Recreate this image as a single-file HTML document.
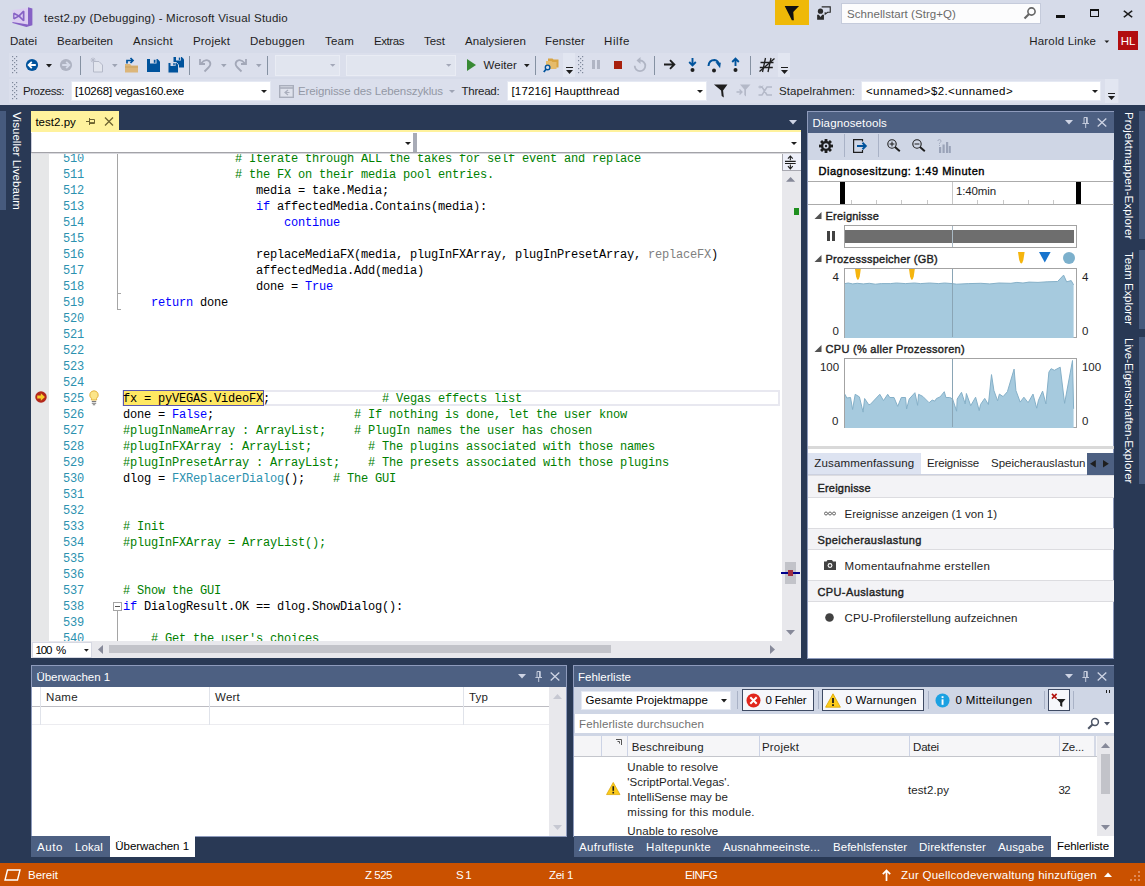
<!DOCTYPE html>
<html><head><meta charset="utf-8"><title>test2.py (Debugging) - Microsoft Visual Studio</title>
<style>
html,body{margin:0;padding:0}
body{width:1145px;height:886px;overflow:hidden;position:relative;background:#293955;font-family:"Liberation Sans",sans-serif;font-size:12px;color:#1e1e1e}
.a{position:absolute}
.t{position:absolute;white-space:pre;font-family:"Liberation Sans",sans-serif}
#chrome{left:0;top:0;width:1145px;height:105px;background:#d6dbe9}
.combo{position:absolute;background:#fff;border:1px solid #e5e9f3;box-sizing:border-box}
.grip{position:absolute;width:5px;background-image:radial-gradient(circle,#8a93a8 0.7px,transparent 0.9px);background-size:3px 3px}
.vsep{position:absolute;width:1px;background:#8591a2}
.ptitle{position:absolute;height:21px;background:#4d6082}
.panel{position:absolute;background:#fff}
.code div.ln{color:#2b91af}
.code{position:absolute;left:0;top:0;font-family:"Liberation Mono",monospace;font-size:12px;letter-spacing:-0.201px;white-space:pre;line-height:16px;color:#000}
.code div{position:absolute;height:16px;white-space:pre}
.c{color:#008000}.k{color:#0000ff}.g{color:#808080}.cl{color:#2b91af}
svg{position:absolute;overflow:visible}
</style></head><body>
<!-- ===== top chrome ===== -->
<div id="chrome" class="a"></div>
<!-- VS logo -->
<svg style="left:11.8px;top:6.8px" width="20.4" height="19.9" viewBox="135 78 233 227"><path d="M140 112 L318 88 L318 290 L140 258 Z" fill="#dccdf1"/><path d="M318 80 L368 95 L368 287 L300 305 L140 262 L140 250 L318 278 Z" fill="#8661c5"/><path d="M148 150 L160 142 L212 170 L262 118 L278 125 L278 235 L262 240 L212 192 L160 220 L148 212 Z M163 165 L163 197 L196 181 Z M228 181 L258 150 L258 212 Z" fill="#8661c5" fill-rule="evenodd"/></svg>
<!-- notification flag -->
<div class="a" style="left:775px;top:0;width:34px;height:25.3px;background:#efb908"></div>
<svg style="left:784px;top:5px" width="16" height="16" viewBox="160 57 183 183"><path d="M168 68 L332 68 L266 138 L273 230 L250 230 Z" fill="#111"/></svg>
<!-- feedback icon -->
<svg style="left:816px;top:5px" width="16" height="16" viewBox="527 57 183 183"><path d="M592 78 H690 V140 H660 L632 162 V140" fill="none" stroke="#2a2a2a" stroke-width="13"/><circle cx="578" cy="128" r="30" fill="#2a2a2a"/><path d="M540 168 H560 L578 195 L598 168 H618 V226 H540 Z" fill="#2a2a2a"/></svg>
<!-- quick launch -->
<div class="combo" style="left:841px;top:3px;width:200px;height:21px;border-color:#c5cbdb;background:#fcfcfd"></div>
<svg style="left:1023px;top:6px" width="14" height="14" viewBox="0 0 14 14"><circle cx="8.5" cy="5.5" r="3.6" fill="none" stroke="#666" stroke-width="1.6"/><path d="M6 8 L1.5 12.5" stroke="#666" stroke-width="2.2"/></svg>
<!-- window buttons -->
<div class="a" style="left:1056px;top:14.7px;width:9px;height:3.2px;background:#111"></div>
<div class="a" style="left:1090px;top:9.1px;width:7.2px;height:5px;border:1px solid #111;border-top-width:2.8px;box-sizing:content-box"></div>
<svg style="left:1123px;top:10px" width="10" height="8" viewBox="0 0 12 12" preserveAspectRatio="none"><path d="M1 1 L11 11 M11 1 L1 11" stroke="#1e1e1e" stroke-width="2"/></svg>
<!-- user badge -->
<svg style="left:1103.6px;top:39.6px" width="6.5" height="4" viewBox="0 0 8 5"><path d="M0.5 0.5 H6.5 L3.5 3.8 Z" fill="#1e1e1e"/></svg>
<div class="a" style="left:1118.1px;top:31.2px;width:19.7px;height:19.3px;background:#b20e10"></div>
<!-- ===== toolbar row 1 ===== -->
<div class="a" style="left:9px;top:53px;width:781px;height:24px;background:#dbdfec"></div>
<div class="a" style="left:9px;top:79px;width:1110px;height:24px;background:#dbdfec"></div>
<svg style="left:12.0px;top:56.0px" width="6" height="18" viewBox="0 0 6 18"><g fill="#7f899c"><rect x="0" y="0" width="1.2" height="1.2"/><rect x="4" y="0" width="1.2" height="1.2"/><rect x="2" y="2" width="1.2" height="1.2"/><rect x="0" y="4" width="1.2" height="1.2"/><rect x="4" y="4" width="1.2" height="1.2"/><rect x="2" y="6" width="1.2" height="1.2"/><rect x="0" y="8" width="1.2" height="1.2"/><rect x="4" y="8" width="1.2" height="1.2"/><rect x="2" y="10" width="1.2" height="1.2"/><rect x="0" y="12" width="1.2" height="1.2"/><rect x="4" y="12" width="1.2" height="1.2"/><rect x="2" y="14" width="1.2" height="1.2"/><rect x="0" y="16" width="1.2" height="1.2"/><rect x="4" y="16" width="1.2" height="1.2"/></g></svg>
<svg style="left:25.2px;top:57.9px" width="14" height="14" viewBox="0 0 14 14"><circle cx="7" cy="7" r="6.1" fill="#00539c"/><path d="M10.8 7 H4 M6.8 3.8 L3.6 7 L6.8 10.2" stroke="#fff" stroke-width="1.8" fill="none"/></svg>
<svg style="left:46px;top:63.7px" width="6" height="3.5" viewBox="0 0 7 4" preserveAspectRatio="none"><path d="M0 0 H7 L3.5 4 Z" fill="#1e1e1e"/></svg>
<svg style="left:58.9px;top:57.9px" width="14" height="14" viewBox="0 0 14 14"><circle cx="7" cy="7" r="6.1" fill="#aeb3c2"/><path d="M3.2 7 H10 M7.2 3.8 L10.4 7 L7.2 10.2" stroke="#d6dbe9" stroke-width="1.8" fill="none"/></svg>
<div class="vsep" style="left:80px;top:56px;height:19px"></div>
<!-- new item (disabled) -->
<svg style="left:90px;top:57px" width="14" height="16" viewBox="0 0 14 16"><path d="M3.5 4.5 H9 L12.5 8 V15 H3.5 Z" fill="#e2e5ee" stroke="#b4b9c8" stroke-width="1"/><path d="M3 0.5 V5.5 M0.5 3 H5.5 M1.2 1.2 L4.8 4.8 M4.8 1.2 L1.2 4.8" stroke="#b4b9c8" stroke-width="0.9"/></svg>
<svg style="left:111.5px;top:63.9px" width="5.6" height="3.3" viewBox="0 0 7 4" preserveAspectRatio="none"><path d="M0 0 H7 L3.5 4 Z" fill="#9ea4b4"/></svg>
<!-- open -->
<svg style="left:124px;top:57px" width="15" height="16" viewBox="0 0 15 16"><path d="M1 7 H6 L7.5 8.5 H14 V15.5 H1 Z" fill="#dcb67a"/><path d="M1 10 H14" stroke="#c9a25f" stroke-width="1"/><path d="M3 6.5 V3.5 H8.5 M6.5 1 L9 3.5 L6.5 6" stroke="#00539c" stroke-width="1.7" fill="none"/></svg>
<!-- save -->
<svg style="left:147px;top:59px" width="13" height="13" viewBox="0 0 13 13"><path d="M0 0 H10.5 L13 2.5 V13 H0 Z" fill="#00539c"/><rect x="3" y="0" width="6.5" height="4.5" fill="#d6dbe9"/><rect x="6.8" y="0.8" width="1.7" height="3" fill="#00539c"/><rect x="2.5" y="8" width="8" height="5" fill="#00539c"/></svg>
<!-- save all -->
<svg style="left:168px;top:57px" width="16" height="16" viewBox="0 0 16 16"><path d="M5.5 0 H13.8 L16 2.2 V10.5 H5.5 Z" fill="#00539c"/><rect x="8" y="0" width="5" height="3.5" fill="#d6dbe9"/><rect x="10.8" y="0.6" width="1.4" height="2.3" fill="#00539c"/><path d="M0 5.5 H8.3 L10.5 7.7 V16 H0 Z" fill="#00539c" stroke="#d6dbe9" stroke-width="1"/><rect x="2.5" y="5.5" width="5" height="3.5" fill="#d6dbe9"/><rect x="5.3" y="6.1" width="1.4" height="2.3" fill="#00539c"/></svg>
<div class="vsep" style="left:189px;top:56px;height:19px"></div>
<!-- undo / redo (disabled) -->
<svg style="left:199px;top:58px" width="13" height="14" viewBox="0 0 13 14"><path d="M1 1 V6 H6" stroke="#a3a8b8" stroke-width="1.8" fill="none"/><path d="M2 5.5 Q6 0.5 10 3 Q13 6 9.5 9.5 L5.5 13.5" stroke="#a3a8b8" stroke-width="1.8" fill="none"/></svg>
<svg style="left:220.5px;top:63.9px" width="5.6" height="3.3" viewBox="0 0 7 4" preserveAspectRatio="none"><path d="M0 0 H7 L3.5 4 Z" fill="#9ea4b4"/></svg>
<svg style="left:234px;top:58px" width="13" height="14" viewBox="0 0 13 14"><path d="M12 1 V6 H7" stroke="#a3a8b8" stroke-width="1.8" fill="none"/><path d="M11 5.5 Q7 0.5 3 3 Q0 6 3.5 9.5 L7.5 13.5" stroke="#a3a8b8" stroke-width="1.8" fill="none"/></svg>
<svg style="left:255.5px;top:63.9px" width="5.6" height="3.3" viewBox="0 0 7 4" preserveAspectRatio="none"><path d="M0 0 H7 L3.5 4 Z" fill="#9ea4b4"/></svg>
<div class="vsep" style="left:267px;top:56px;height:19px"></div>
<div class="combo" style="left:275px;top:55px;width:65px;height:21px;background:#e1e5ef;border-color:#e9ecf4"></div>
<svg style="left:330.3px;top:64px" width="5.4" height="3.2" viewBox="0 0 6 4" preserveAspectRatio="none"><path d="M0 0 H6 L3 3.6 Z" fill="#a3a8b8"/></svg>
<div class="combo" style="left:346px;top:55px;width:110px;height:21px;background:#e1e5ef;border-color:#e9ecf4"></div>
<svg style="left:446.3px;top:64px" width="5.4" height="3.2" viewBox="0 0 6 4" preserveAspectRatio="none"><path d="M0 0 H6 L3 3.6 Z" fill="#a3a8b8"/></svg>
<svg style="left:467px;top:59px" width="9" height="12" viewBox="0 0 9 12"><path d="M0 0 L9 6 L0 12 Z" fill="#388a34"/></svg>
<svg style="left:523.5px;top:63.9px" width="5.6" height="3.3" viewBox="0 0 7 4" preserveAspectRatio="none"><path d="M0 0 H7 L3.5 4 Z" fill="#1e1e1e"/></svg>
<div class="vsep" style="left:535px;top:56px;height:19px"></div>
<!-- find in files -->
<svg style="left:543px;top:57px" width="16" height="16" viewBox="0 0 16 16"><path d="M5 1.5 H9.5 L10.5 2.5 H15.5 V10.5 H5 Z" fill="#d9a441"/><path d="M3 4 H8.5 L9.5 5 H13.5 V12 H3 Z" fill="#e6bb6a"/><circle cx="4.6" cy="10.4" r="2.3" fill="#d6dbe9" stroke="#00539c" stroke-width="1.4"/><path d="M3 12.2 L0.8 15" stroke="#00539c" stroke-width="1.8"/></svg>
<div class="a" style="left:563px;top:53px;width:12px;height:24px;background:#e2e6f1"></div>
<svg style="left:566px;top:67px" width="7" height="7" viewBox="0 0 7 7"><path d="M0 0.5 H7" stroke="#1e1e1e" stroke-width="1"/><path d="M0 3 H7 L3.5 7 Z" fill="#1e1e1e"/></svg>
<svg style="left:578.0px;top:56.0px" width="6" height="18" viewBox="0 0 6 18"><g fill="#7f899c"><rect x="0" y="0" width="1.2" height="1.2"/><rect x="4" y="0" width="1.2" height="1.2"/><rect x="2" y="2" width="1.2" height="1.2"/><rect x="0" y="4" width="1.2" height="1.2"/><rect x="4" y="4" width="1.2" height="1.2"/><rect x="2" y="6" width="1.2" height="1.2"/><rect x="0" y="8" width="1.2" height="1.2"/><rect x="4" y="8" width="1.2" height="1.2"/><rect x="2" y="10" width="1.2" height="1.2"/><rect x="0" y="12" width="1.2" height="1.2"/><rect x="4" y="12" width="1.2" height="1.2"/><rect x="2" y="14" width="1.2" height="1.2"/><rect x="0" y="16" width="1.2" height="1.2"/><rect x="4" y="16" width="1.2" height="1.2"/></g></svg>
<div class="a" style="left:592px;top:60px;width:3px;height:9px;background:#b0b5c4"></div>
<div class="a" style="left:597px;top:60px;width:3px;height:9px;background:#b0b5c4"></div>
<div class="a" style="left:614px;top:61px;width:8px;height:8px;background:#a8200d"></div>
<svg style="left:633px;top:57px" width="14" height="16" viewBox="0 0 14 16"><path d="M7 3.5 A5.3 5.3 0 1 1 1.7 8.8" stroke="#b0b5c4" stroke-width="1.8" fill="none"/><path d="M7.5 0 V7 L3.5 3.5 Z" fill="#b0b5c4"/></svg>
<div class="vsep" style="left:654px;top:56px;height:19px"></div>
<svg style="left:664px;top:59px" width="12" height="11" viewBox="0 0 12 11"><path d="M0 5.5 H10 M6 1.2 L10.3 5.5 L6 9.8" stroke="#1e1e1e" stroke-width="1.9" fill="none"/></svg>
<svg style="left:688px;top:57px" width="9" height="16" viewBox="0 0 9 16"><path d="M4.5 1 V8 M1.2 5 L4.5 8.3 L7.8 5" stroke="#00539c" stroke-width="1.9" fill="none"/><circle cx="4.5" cy="13" r="2" fill="#1e1e1e"/></svg>
<svg style="left:707px;top:58px" width="14" height="15" viewBox="0 0 14 15"><path d="M1.5 8 Q2 2 7.5 2 Q11 2.3 11.5 6" stroke="#00539c" stroke-width="2" fill="none"/><path d="M8 4.5 H13.5 V10 Z" fill="#00539c" transform="rotate(8 11 7)"/><circle cx="7" cy="12.5" r="2" fill="#1e1e1e"/></svg>
<svg style="left:731px;top:57px" width="9" height="16" viewBox="0 0 9 16"><path d="M4.5 9 V2 M1.2 5 L4.5 1.7 L7.8 5" stroke="#00539c" stroke-width="1.9" fill="none"/><circle cx="4.5" cy="13" r="2" fill="#1e1e1e"/></svg>
<div class="vsep" style="left:750px;top:56px;height:19px"></div>
<svg style="left:759px;top:57px" width="16" height="16" viewBox="0 0 16 16"><path d="M6.5 1 L3.5 15 M12 1 L9 15 M1.5 5.5 H14.5 M0.8 10.5 H13.8" stroke="#1e1e1e" stroke-width="1.3" fill="none"/><path d="M0.5 14.5 L15.5 1.5" stroke="#1e1e1e" stroke-width="1.4"/></svg>
<div class="a" style="left:778px;top:53px;width:12px;height:24px;background:#e2e6f1"></div>
<svg style="left:781px;top:67px" width="7" height="7" viewBox="0 0 7 7"><path d="M0 0.5 H7" stroke="#1e1e1e" stroke-width="1"/><path d="M0 3 H7 L3.5 7 Z" fill="#1e1e1e"/></svg>
<!-- ===== toolbar row 2 ===== -->
<svg style="left:12.0px;top:82.0px" width="6" height="18" viewBox="0 0 6 18"><g fill="#7f899c"><rect x="0" y="0" width="1.2" height="1.2"/><rect x="4" y="0" width="1.2" height="1.2"/><rect x="2" y="2" width="1.2" height="1.2"/><rect x="0" y="4" width="1.2" height="1.2"/><rect x="4" y="4" width="1.2" height="1.2"/><rect x="2" y="6" width="1.2" height="1.2"/><rect x="0" y="8" width="1.2" height="1.2"/><rect x="4" y="8" width="1.2" height="1.2"/><rect x="2" y="10" width="1.2" height="1.2"/><rect x="0" y="12" width="1.2" height="1.2"/><rect x="4" y="12" width="1.2" height="1.2"/><rect x="2" y="14" width="1.2" height="1.2"/><rect x="0" y="16" width="1.2" height="1.2"/><rect x="4" y="16" width="1.2" height="1.2"/></g></svg>
<div class="combo" style="left:71px;top:81px;width:200px;height:20px"></div>
<svg style="left:261px;top:89.7px" width="6" height="3.3" viewBox="0 0 6 4" preserveAspectRatio="none"><path d="M0 0 H6 L3 3.6 Z" fill="#1e1e1e"/></svg>
<svg style="left:279px;top:85px" width="15" height="13" viewBox="0 0 15 13"><rect x="0.7" y="0.7" width="13.6" height="11.6" fill="#dfe2ec" stroke="#a9aebc" stroke-width="1.4"/><path d="M1 3 H14" stroke="#a9aebc" stroke-width="1.6"/><path d="M9 5 L6 7.5 L9 10 M6 7.5 H10.5" stroke="#a9aebc" stroke-width="1.2" fill="none"/></svg>
<svg style="left:449px;top:89.7px" width="6" height="3.3" viewBox="0 0 6 4" preserveAspectRatio="none"><path d="M0 0 H6 L3 3.6 Z" fill="#9ea4b4"/></svg>
<div class="combo" style="left:507px;top:81px;width:200px;height:20px"></div>
<svg style="left:697px;top:89.7px" width="6" height="3.3" viewBox="0 0 6 4" preserveAspectRatio="none"><path d="M0 0 H6 L3 3.6 Z" fill="#1e1e1e"/></svg>
<svg style="left:714px;top:84px" width="15" height="14" viewBox="0 0 15 14"><path d="M0.5 0.5 H14 L9 6.5 V13.5 L7 12 V6.5 Z" fill="#1e1e1e" transform="skewX(6) translate(-0.6 0)"/></svg>
<svg style="left:736px;top:84px" width="15" height="14" viewBox="0 0 15 14"><path d="M4 0.5 H14.5 L10 5.5 V12.5 L8.3 11 V5.5 Z" fill="#b4b9c8"/><path d="M0.5 8 H6 M3.5 5.5 L6 8 L3.5 10.5" stroke="#b4b9c8" stroke-width="1.3" fill="none"/></svg>
<svg style="left:758px;top:85px" width="15" height="12" viewBox="0 0 15 12"><path d="M0.5 2 H4 L9 10 H14 M0.5 10 H4 L9 2 H14" stroke="#b4b9c8" stroke-width="1.5" fill="none"/><path d="M2 0.5 L5 3.5 M5 0.5 L2 3.5" stroke="#b4b9c8" stroke-width="1"/></svg>
<div class="combo" style="left:861px;top:81px;width:240px;height:20px"></div>
<svg style="left:1092px;top:89.7px" width="6" height="3.3" viewBox="0 0 6 4" preserveAspectRatio="none"><path d="M0 0 H6 L3 3.6 Z" fill="#1e1e1e"/></svg>
<div class="a" style="left:1105px;top:79px;width:13px;height:24px;background:#e2e6f1"></div>
<svg style="left:1108px;top:93px" width="7" height="7" viewBox="0 0 7 7"><path d="M0 0.5 H7" stroke="#1e1e1e" stroke-width="1"/><path d="M0 3 H7 L3.5 7 Z" fill="#1e1e1e"/></svg>

<!-- ===== editor ===== -->
<div class="a" style="left:0;top:111px;width:6px;height:99px;background:#465a7d"></div>
<div class="a" style="left:31px;top:111px;width:88px;height:20px;background:#fff29d"></div>
<div class="a" style="left:31px;top:130px;width:769.5px;height:2px;background:#fff29d"></div>
<svg style="left:86px;top:117px" width="9" height="9" viewBox="0 0 9 9"><path d="M0 4.5 H3.5 M3.5 1 V8 M3.5 2.5 H8.5 V6.5 H3.5 M3.5 5.6 H8.5" stroke="#6d6330" stroke-width="1" fill="none"/></svg>
<svg style="left:104px;top:117px" width="10" height="9" viewBox="0 0 10 9"><path d="M1 0.5 L9 8.5 M9 0.5 L1 8.5" stroke="#6d6330" stroke-width="1.3"/></svg>
<svg style="left:789px;top:120px" width="8" height="5" viewBox="0 0 8 5"><path d="M0 0 H8 L4 4.5 Z" fill="#ced4e4"/></svg>
<div class="a" style="left:31px;top:132px;width:769.5px;height:526px;background:#fff;overflow:hidden">
<div class="a" style="left:0;top:1px;width:770px;height:525px">
<div class="a" style="left:0;top:-1px;width:770px;height:21px;background:#fff"></div>
<div class="a" style="left:0;top:0;width:1px;height:19px;background:#cccedb"></div>
<div class="a" style="left:382.3px;top:-0.5px;width:4.2px;height:19.5px;background:#a8abb6"></div>
<svg style="left:374.1px;top:8.9px" width="6" height="3.4" viewBox="0 0 6 4" preserveAspectRatio="none"><path d="M0 0 H6 L3 3.6 Z" fill="#1e1e1e"/></svg>
<svg style="left:759.8px;top:8.9px" width="6" height="3.4" viewBox="0 0 6 4" preserveAspectRatio="none"><path d="M0 0 H6 L3 3.6 Z" fill="#1e1e1e"/></svg>
<div class="a" style="left:0;top:20px;width:751px;height:489px;overflow:hidden;background:#fff">
<div class="a" style="left:0;top:0;width:18px;height:489px;background:#e6e7e8"></div>
<div class="a" style="left:91px;top:236.5px;width:658px;height:16.5px;border:2px solid #e8e8f0;box-sizing:border-box"></div>
<div class="a" style="left:92px;top:236.5px;width:141px;height:16.5px;background:#ffe862;border:1px solid #5b57ad;box-sizing:border-box"></div>
<div class="a" style="left:86px;top:0;width:1px;height:157px;background:#a5a5a5"></div>
<div class="a" style="left:86px;top:140px;width:4px;height:1px;background:#a5a5a5"></div>
<div class="a" style="left:86px;top:156px;width:4px;height:1px;background:#a5a5a5"></div>
<div class="a" style="left:82px;top:449px;width:9px;height:9px;border:1px solid #a5a5a5;box-sizing:border-box;background:#fff"></div>
<div class="a" style="left:84px;top:453px;width:5px;height:1px;background:#555"></div>
<div class="a" style="left:86px;top:458px;width:1px;height:40px;background:#a5a5a5"></div>
<div class="code">
<div class="ln" style="top:-2px;left:32px">510</div>
<div style="top:-2px;left:204px"><span class="c"># Iterate through ALL the takes for self event and replace</span></div>
<div class="ln" style="top:14px;left:32px">511</div>
<div style="top:14px;left:204px"><span class="c"># the FX on their media pool entries.</span></div>
<div class="ln" style="top:30px;left:32px">512</div>
<div style="top:30px;left:225px">media = take.Media;</div>
<div class="ln" style="top:46px;left:32px">513</div>
<div style="top:46px;left:225px"><span class="k">if</span> affectedMedia.Contains(media):</div>
<div class="ln" style="top:62px;left:32px">514</div>
<div style="top:62px;left:253px"><span class="k">continue</span></div>
<div class="ln" style="top:78px;left:32px">515</div>
<div class="ln" style="top:94px;left:32px">516</div>
<div style="top:94px;left:225px">replaceMediaFX(media, plugInFXArray, plugInPresetArray, <span class="g">replaceFX</span>)</div>
<div class="ln" style="top:110px;left:32px">517</div>
<div style="top:110px;left:225px">affectedMedia.Add(media)</div>
<div class="ln" style="top:126px;left:32px">518</div>
<div style="top:126px;left:225px">done = <span class="k">True</span></div>
<div class="ln" style="top:142px;left:32px">519</div>
<div style="top:142px;left:120px"><span class="k">return</span> done</div>
<div class="ln" style="top:158px;left:32px">520</div>
<div class="ln" style="top:174px;left:32px">521</div>
<div class="ln" style="top:190px;left:32px">522</div>
<div class="ln" style="top:206px;left:32px">523</div>
<div class="ln" style="top:222px;left:32px">524</div>
<div class="ln" style="top:238px;left:32px">525</div>
<div style="top:238px;left:92px">fx = pyVEGAS.VideoFX;                <span class="c"># Vegas effects list</span></div>
<div class="ln" style="top:254px;left:32px">526</div>
<div style="top:254px;left:92px">done = <span class="k">False</span>;                    <span class="c"># If nothing is done, let the user know</span></div>
<div class="ln" style="top:270px;left:32px">527</div>
<div style="top:270px;left:92px"><span class="c">#plugInNameArray : ArrayList;    # PlugIn names the user has chosen</span></div>
<div class="ln" style="top:286px;left:32px">528</div>
<div style="top:286px;left:92px"><span class="c">#plugInFXArray : ArrayList;        # The plugins associated with those names</span></div>
<div class="ln" style="top:302px;left:32px">529</div>
<div style="top:302px;left:92px"><span class="c">#plugInPresetArray : ArrayList;    # The presets associated with those plugins</span></div>
<div class="ln" style="top:318px;left:32px">530</div>
<div style="top:318px;left:92px">dlog = <span class="cl">FXReplacerDialog</span>();    <span class="c"># The GUI</span></div>
<div class="ln" style="top:334px;left:32px">531</div>
<div class="ln" style="top:350px;left:32px">532</div>
<div class="ln" style="top:366px;left:32px">533</div>
<div style="top:366px;left:92px"><span class="c"># Init</span></div>
<div class="ln" style="top:382px;left:32px">534</div>
<div style="top:382px;left:92px"><span class="c">#plugInFXArray = ArrayList();</span></div>
<div class="ln" style="top:398px;left:32px">535</div>
<div class="ln" style="top:414px;left:32px">536</div>
<div class="ln" style="top:430px;left:32px">537</div>
<div style="top:430px;left:92px"><span class="c"># Show the GUI</span></div>
<div class="ln" style="top:446px;left:32px">538</div>
<div style="top:446px;left:92px"><span class="k">if</span> DialogResult.OK == dlog.ShowDialog():</div>
<div class="ln" style="top:462px;left:32px">539</div>
<div class="ln" style="top:478px;left:32px">540</div>
<div style="top:478px;left:120px"><span class="c"># Get the user&#x27;s choices</span></div>
</div>
<svg style="left:3.5px;top:237.8px" width="12" height="12" viewBox="0 0 13 13"><circle cx="6.5" cy="6.5" r="6.2" fill="#b3271b"/><path d="M2.4 4.8 H6.3 V2.4 L10.8 6.5 L6.3 10.6 V8.2 H2.4 Z" fill="#f7cb2a"/></svg>
<svg style="left:58px;top:237px" width="10" height="16" viewBox="0 0 10 16"><path d="M5 0.8 A4.2 4.2 0 0 1 7.6 8.3 V10 H2.4 V8.3 A4.2 4.2 0 0 1 5 0.8 Z" fill="#fce589" stroke="#e3b341" stroke-width="1"/><path d="M2.8 11.5 H7.2 M2.8 13.2 H7.2 M3.8 14.8 H6.2" stroke="#7a7a7a" stroke-width="1.1"/></svg>
</div>
<div class="a" style="left:0;top:19px;width:770px;height:1px;background:#a3a3a8"></div>
<div class="a" style="left:0;top:20px;width:770px;height:1px;background:#d9d9de"></div>
<div class="a" style="left:750.5px;top:21px;width:19px;height:488px;background:#e8e8ec"></div>
<div class="a" style="left:750.5px;top:20.7px;width:19px;height:17px;background:#eef0fa;border-left:1px solid #a8a8b0;border-bottom:1px solid #a8a8b0;box-sizing:border-box"></div>
<svg style="left:754.2px;top:23.1px" width="10.7" height="12.9" viewBox="0 0 11 12" preserveAspectRatio="none"><path d="M0 5 H11 M0 7 H11" stroke="#1e1e1e" stroke-width="1"/><path d="M5.5 0 V4 M5.5 8 V12 M3 2.5 L5.5 0 L8 2.5 M3 9.5 L5.5 12 L8 9.5" stroke="#1e1e1e" stroke-width="1.1" fill="none"/></svg>
<svg style="left:755px;top:44.1px" width="9.2" height="4.7" viewBox="0 0 9 5" preserveAspectRatio="none"><path d="M0 5 H9 L4.5 0 Z" fill="#868999"/></svg>
<div class="a" style="left:763px;top:75px;width:5px;height:7px;background:#1e8f1e"></div>
<div class="a" style="left:754px;top:429px;width:11px;height:22px;background:#c2c3c9"></div>
<div class="a" style="left:750px;top:439px;width:19px;height:2px;background:#00008b"></div>
<div class="a" style="left:757px;top:437px;width:5px;height:6px;background:#a03040"></div>
<svg style="left:755px;top:497px" width="9" height="5" viewBox="0 0 9 5"><path d="M0 0 H9 L4.5 5 Z" fill="#868999"/></svg>
<div class="a" style="left:0;top:508px;width:770px;height:17px;background:#e8e8ec"></div>
<div class="a" style="left:0.5px;top:508.5px;width:60px;height:16.5px;background:#fff;border:1px solid #d6d8e2;box-sizing:border-box"></div>
<svg style="left:52.9px;top:516.1px" width="4.8" height="3.2" viewBox="0 0 6 4" preserveAspectRatio="none"><path d="M0 0 H6 L3 3.6 Z" fill="#1e1e1e"/></svg>
<svg style="left:67px;top:512px" width="5" height="9" viewBox="0 0 5 9"><path d="M5 0 V9 L0 4.5 Z" fill="#868999"/></svg>
<div class="a" style="left:78.2px;top:512.2px;width:502px;height:8.3px;background:#c2c3c9"></div>
<svg style="left:739px;top:512px" width="5" height="9" viewBox="0 0 5 9"><path d="M0 0 V9 L5 4.5 Z" fill="#868999"/></svg>
</div></div>
<!-- ===== diagnostic tools ===== -->
<div class="a" style="left:807px;top:111px;width:307px;height:548px;background:#fff;border:1px solid #8e9bbc;box-sizing:border-box"></div>
<div class="a" style="left:808px;top:112px;width:306px;height:21px;background:#4d6082"></div>
<svg style="left:1065px;top:120px" width="8" height="5" viewBox="0 0 8 5"><path d="M0 0 H8 L4 4.5 Z" fill="#ced4e4"/></svg>
<svg style="left:1082px;top:117px" width="7.4" height="11" viewBox="0 0 9 11" preserveAspectRatio="none"><path d="M2.5 0.5 H6.5 V6 M2.5 0.5 V6 M5.5 0.5 V6 M0.5 6.5 H8.5 M4.5 6.5 V11" stroke="#ced4e4" stroke-width="1" fill="none"/></svg>
<svg style="left:1097px;top:118px" width="10" height="9" viewBox="0 0 10 9"><path d="M0.7 0.5 L9.3 8.5 M9.3 0.5 L0.7 8.5" stroke="#ced4e4" stroke-width="1.3"/></svg>
<div class="a" style="left:808px;top:133px;width:306px;height:27px;background:#cfd6e5"></div>
<svg style="left:819px;top:138.8px" width="14" height="14" viewBox="0 0 14 14"><g fill="#1e1e1e"><circle cx="7" cy="7" r="5"/><rect x="5.6" y="0" width="2.8" height="14"/><rect x="5.6" y="0" width="2.8" height="14" transform="rotate(45 7 7)"/><rect x="5.6" y="0" width="2.8" height="14" transform="rotate(90 7 7)"/><rect x="5.6" y="0" width="2.8" height="14" transform="rotate(135 7 7)"/></g><circle cx="7" cy="7" r="2.7" fill="#cfd6e5"/><circle cx="7" cy="7" r="1.2" fill="#1e1e1e"/></svg>
<div class="a" style="left:844px;top:134px;width:1px;height:23px;background:#a9b2c6"></div>
<svg style="left:853px;top:139.2px" width="15" height="14" viewBox="0 0 15 14"><path d="M9.5 2.5 V0.6 H0.6 V13.4 H9.5 V11" stroke="#1e1e1e" stroke-width="1.2" fill="none"/><path d="M4 7 H12.5 M9.5 3.8 L12.8 7 L9.5 10.2" stroke="#00539c" stroke-width="1.9" fill="none"/></svg>
<div class="a" style="left:878px;top:134px;width:1px;height:23px;background:#a9b2c6"></div>
<svg style="left:886.5px;top:138.6px" width="14" height="13" viewBox="0 0 14 13"><circle cx="5" cy="5" r="4.2" fill="none" stroke="#1e1e1e" stroke-width="1.1"/><path d="M8 8 L12.8 12.3" stroke="#1e1e1e" stroke-width="1.9"/><path d="M2.6 5 H7.4 M5 2.6 V7.4" stroke="#1e1e1e" stroke-width="1"/></svg>
<svg style="left:912px;top:138.6px" width="14" height="13" viewBox="0 0 14 13"><circle cx="5" cy="5" r="4.2" fill="none" stroke="#1e1e1e" stroke-width="1.1"/><path d="M8 8 L12.8 12.3" stroke="#1e1e1e" stroke-width="1.9"/><path d="M2.6 5 H7.4" stroke="#1e1e1e" stroke-width="1"/></svg>
<svg style="left:937px;top:139px" width="14" height="14" viewBox="0 0 14 14"><g fill="#9aa3b8"><rect x="2" y="8" width="2.2" height="6"/><rect x="5.5" y="5.5" width="2.2" height="8.5"/><rect x="9" y="3" width="2.2" height="11"/><rect x="11.8" y="7" width="2" height="7"/></g><path d="M0.8 2 Q1 0.5 2.6 0.6 Q4.2 0.8 4 2.3 Q3.6 3.4 2.5 4.2 V5" stroke="#a3abbe" stroke-width="1" fill="none"/><rect x="2" y="6" width="1" height="1" fill="#a3abbe"/></svg>
<div class="a" style="left:808px;top:181px;width:306px;height:1px;background:#ababab"></div>
<div class="a" style="left:808px;top:204px;width:306px;height:1px;background:#ababab"></div>
<div class="a" style="left:840px;top:182px;width:5px;height:22px;background:#000"></div>
<div class="a" style="left:1076px;top:182px;width:5px;height:22px;background:#000"></div>
<div class="a" style="left:851px;top:200px;width:1px;height:4px;background:#c8c8c8"></div>
<div class="a" style="left:876px;top:200px;width:1px;height:4px;background:#c8c8c8"></div>
<div class="a" style="left:901px;top:200px;width:1px;height:4px;background:#c8c8c8"></div>
<div class="a" style="left:927px;top:200px;width:1px;height:4px;background:#c8c8c8"></div>
<div class="a" style="left:952px;top:182px;width:1px;height:22px;background:#c8c8c8"></div>
<div class="a" style="left:977px;top:200px;width:1px;height:4px;background:#c8c8c8"></div>
<div class="a" style="left:1003px;top:200px;width:1px;height:4px;background:#c8c8c8"></div>
<div class="a" style="left:1028px;top:200px;width:1px;height:4px;background:#c8c8c8"></div>
<div class="a" style="left:1053px;top:200px;width:1px;height:4px;background:#c8c8c8"></div>
<svg style="left:814px;top:212px" width="8" height="7" viewBox="0 0 8 7"><path d="M7.5 0 V7 H0.5 Z" fill="#525252"/></svg>
<svg style="left:814px;top:255px" width="8" height="7" viewBox="0 0 8 7"><path d="M7.5 0 V7 H0.5 Z" fill="#525252"/></svg>
<svg style="left:814px;top:345px" width="8" height="7" viewBox="0 0 8 7"><path d="M7.5 0 V7 H0.5 Z" fill="#525252"/></svg>
<div class="a" style="left:844px;top:225px;width:233px;height:23px;border:1px solid #a3a3a3;box-sizing:border-box;background:#fff"></div>
<div class="a" style="left:845px;top:230.3px;width:229px;height:13.2px;background:#6e6e6e"></div>
<div class="a" style="left:952px;top:226px;width:1px;height:21px;background:#a9b9c4"></div>
<div class="a" style="left:827px;top:231px;width:3px;height:10px;background:#424242"></div>
<div class="a" style="left:832px;top:231px;width:3px;height:10px;background:#424242"></div>
<svg style="left:1017.6px;top:252px" width="6.6" height="11.6" viewBox="0 0 6.5 11.6" preserveAspectRatio="none"><path d="M0 0 H6.5 L5.3 8 Q3.25 15 1.2 8 Z" fill="#f5b50e"/></svg>
<svg style="left:1039.2px;top:252px" width="11.6" height="10.4" viewBox="0 0 12 10" preserveAspectRatio="none"><path d="M0 0 H12 L6 10 Z" fill="#1874cd"/></svg>
<svg style="left:1063px;top:252px" width="12" height="12" viewBox="0 0 12 12"><circle cx="6" cy="6" r="6" fill="#7cb0cc"/></svg>
<div class="a" style="left:844px;top:268px;width:233px;height:70px;border:1px solid #a3a3a3;box-sizing:border-box;background:#fff"></div>
<svg style="left:844px;top:268px" width="233" height="70" viewBox="0 0 233 70"><path d="M0.9 15.6 L4.2 15.0 L8.7 15.9 L13.2 15.3 L19.3 15.9 L25.3 15.3 L31.3 16.2 L37.3 15.6 L46.4 15.6 L52.4 15.0 L61.5 15.6 L70.5 15.0 L76.5 15.6 L85.6 15.0 L94.6 15.6 L100.6 15.0 L108.2 15.6 L112.7 16.2 L124.7 15.6 L136.8 15.3 L145.8 15.9 L154.9 15.0 L166.9 15.3 L172.9 14.4 L179.0 15.0 L185.0 14.1 L194.0 14.4 L203.1 13.8 L213.6 13.5 L219.6 7.1 L222.6 13.8 L227.2 12.6 L229.6 16.8 L229.6 70 L0.9 70 Z" fill="#a6cade"/><path d="M0.9 15.6 L4.2 15.0 L8.7 15.9 L13.2 15.3 L19.3 15.9 L25.3 15.3 L31.3 16.2 L37.3 15.6 L46.4 15.6 L52.4 15.0 L61.5 15.6 L70.5 15.0 L76.5 15.6 L85.6 15.0 L94.6 15.6 L100.6 15.0 L108.2 15.6 L112.7 16.2 L124.7 15.6 L136.8 15.3 L145.8 15.9 L154.9 15.0 L166.9 15.3 L172.9 14.4 L179.0 15.0 L185.0 14.1 L194.0 14.4 L203.1 13.8 L213.6 13.5 L219.6 7.1 L222.6 13.8 L227.2 12.6 L229.6 16.8" fill="none" stroke="#85b0c8" stroke-width="1"/><path d="M108.5 1 V69" stroke="#8aa5b5" stroke-width="1"/></svg>
<svg style="left:854.5px;top:268.5px" width="5.8" height="11" viewBox="0 0 6.5 11.6" preserveAspectRatio="none"><path d="M0 0 H6.5 L5.3 8 Q3.25 15 1.2 8 Z" fill="#f5b50e"/></svg>
<svg style="left:909.3px;top:268.5px" width="5.8" height="11" viewBox="0 0 6.5 11.6" preserveAspectRatio="none"><path d="M0 0 H6.5 L5.3 8 Q3.25 15 1.2 8 Z" fill="#f5b50e"/></svg>
<div class="a" style="left:844px;top:358px;width:233px;height:70px;border:1px solid #a3a3a3;box-sizing:border-box;background:#fff"></div>
<svg style="left:844px;top:358px" width="233" height="70" viewBox="0 0 233 70"><path d="M1.0 36.3 L2.8 40.0 L6.5 39.5 L8.6 51.5 L11.2 36.3 L15.4 38.9 L19.1 54.1 L20.6 40.5 L24.8 46.8 L26.4 46.3 L35.8 36.3 L39.5 42.6 L43.7 36.3 L45.8 39.5 L50.0 39.5 L53.7 48.4 L57.3 39.5 L61.5 39.5 L62.6 51.0 L65.2 41.0 L70.9 34.7 L73.6 47.3 L74.6 36.3 L78.8 38.4 L85.1 44.7 L88.2 42.1 L90.9 43.1 L92.4 40.5 L96.1 38.9 L100.3 33.7 L101.9 39.5 L105.5 39.5 L105.9 39.5 L108.6 41.0 L112.6 53.2 L113.2 41.0 L117.5 34.3 L121.2 45.9 L122.4 35.5 L126.7 47.7 L131.6 39.2 L135.2 52.6 L136.5 46.5 L140.7 40.4 L144.4 46.5 L147.5 16.6 L149.9 32.5 L153.6 42.8 L155.4 36.1 L159.1 38.6 L163.4 33.7 L170.1 11.1 L171.9 32.5 L176.2 44.1 L179.9 39.2 L184.1 44.7 L189.0 36.1 L192.7 50.2 L194.5 42.2 L198.6 33.1 L201.9 45.9 L204.9 14.1 L207.1 10.7 L210.4 12.3 L216.2 9.2 L220.6 45.3 L228.5 2.5 L229.6 50.8 L229.6 70 L1.0 70 Z" fill="#a6cade"/><path d="M1.0 36.3 L2.8 40.0 L6.5 39.5 L8.6 51.5 L11.2 36.3 L15.4 38.9 L19.1 54.1 L20.6 40.5 L24.8 46.8 L26.4 46.3 L35.8 36.3 L39.5 42.6 L43.7 36.3 L45.8 39.5 L50.0 39.5 L53.7 48.4 L57.3 39.5 L61.5 39.5 L62.6 51.0 L65.2 41.0 L70.9 34.7 L73.6 47.3 L74.6 36.3 L78.8 38.4 L85.1 44.7 L88.2 42.1 L90.9 43.1 L92.4 40.5 L96.1 38.9 L100.3 33.7 L101.9 39.5 L105.5 39.5 L105.9 39.5 L108.6 41.0 L112.6 53.2 L113.2 41.0 L117.5 34.3 L121.2 45.9 L122.4 35.5 L126.7 47.7 L131.6 39.2 L135.2 52.6 L136.5 46.5 L140.7 40.4 L144.4 46.5 L147.5 16.6 L149.9 32.5 L153.6 42.8 L155.4 36.1 L159.1 38.6 L163.4 33.7 L170.1 11.1 L171.9 32.5 L176.2 44.1 L179.9 39.2 L184.1 44.7 L189.0 36.1 L192.7 50.2 L194.5 42.2 L198.6 33.1 L201.9 45.9 L204.9 14.1 L207.1 10.7 L210.4 12.3 L216.2 9.2 L220.6 45.3 L228.5 2.5 L229.6 50.8" fill="none" stroke="#85b0c8" stroke-width="1"/><path d="M108.5 1 V69" stroke="#8aa5b5" stroke-width="1"/></svg>
<div class="a" style="left:808px;top:446.3px;width:306px;height:2.6px;background:#d9d9d9"></div>
<div class="a" style="left:808px;top:453px;width:113px;height:22px;background:#dde3f1"></div>
<div class="a" style="left:808px;top:474px;width:306px;height:1px;background:#ccd1e0"></div>
<div class="a" style="left:1087px;top:453px;width:27px;height:22px;background:#4d6082"></div>
<svg style="left:1090.1px;top:460.4px" width="5.8" height="7.4" viewBox="0 0 5 8" preserveAspectRatio="none"><path d="M5 0 V8 L0 4 Z" fill="#1e1e1e"/></svg>
<svg style="left:1103.2px;top:460.4px" width="5.8" height="7.4" viewBox="0 0 5 8" preserveAspectRatio="none"><path d="M0 0 V8 L5 4 Z" fill="#1e1e1e"/></svg>
<div class="a" style="left:808px;top:475px;width:306px;height:23px;background:#f3f3f6;border-top:1px solid #dcdce0;border-bottom:1px solid #dcdce0;box-sizing:border-box"></div>
<div class="a" style="left:808px;top:528px;width:306px;height:22px;background:#f3f3f6;border-top:1px solid #dcdce0;border-bottom:1px solid #dcdce0;box-sizing:border-box"></div>
<div class="a" style="left:808px;top:580px;width:306px;height:22px;background:#f3f3f6;border-top:1px solid #dcdce0;border-bottom:1px solid #dcdce0;box-sizing:border-box"></div>
<svg style="left:824px;top:511px" width="12" height="5" viewBox="0 0 12 5"><circle cx="2" cy="2.5" r="1.5" fill="none" stroke="#555" stroke-width="0.9"/><circle cx="6" cy="2.5" r="1.5" fill="none" stroke="#555" stroke-width="0.9"/><circle cx="10" cy="2.5" r="1.5" fill="none" stroke="#555" stroke-width="0.9"/></svg>
<svg style="left:824px;top:560px" width="12" height="10" viewBox="0 0 12 10"><path d="M0 1.5 H2.5 L3.5 0 H8 L9 1.5 H12 V10 H0 Z" fill="#424242"/><circle cx="6" cy="5.5" r="2.4" fill="#fff"/><circle cx="6" cy="5.5" r="1.3" fill="#424242"/></svg>
<svg style="left:825px;top:613px" width="9" height="9" viewBox="0 0 9 9"><circle cx="4.5" cy="4.5" r="4.3" fill="#424242"/></svg>
<!-- ===== right auto-hide strip ===== -->
<div class="a" style="left:1139px;top:111px;width:6px;height:128px;background:#465a7d"></div>
<div class="a" style="left:1139px;top:250px;width:6px;height:79px;background:#465a7d"></div>
<div class="a" style="left:1139px;top:337px;width:6px;height:147px;background:#465a7d"></div>
<!-- ===== watch panel ===== -->
<div class="a" style="left:31px;top:665px;width:536px;height:172px;background:#fff;border:1px solid #8e9bbc;box-sizing:border-box"></div>
<div class="a" style="left:32px;top:666px;width:534px;height:20.8px;background:#4d6082"></div>
<svg style="left:518px;top:674px" width="8" height="5" viewBox="0 0 8 5"><path d="M0 0 H8 L4 4.5 Z" fill="#ced4e4"/></svg>
<svg style="left:535px;top:671px" width="7.4" height="11" viewBox="0 0 9 11" preserveAspectRatio="none"><path d="M2.5 0.5 H6.5 V6 M2.5 0.5 V6 M5.5 0.5 V6 M0.5 6.5 H8.5 M4.5 6.5 V11" stroke="#ced4e4" stroke-width="1" fill="none"/></svg>
<svg style="left:550px;top:672px" width="10" height="9" viewBox="0 0 10 9"><path d="M0.7 0.5 L9.3 8.5 M9.3 0.5 L0.7 8.5" stroke="#ced4e4" stroke-width="1.3"/></svg>
<!-- header row -->
<div class="a" style="left:32px;top:706px;width:517px;height:1px;background:#bcbcc2"></div>
<div class="a" style="left:32px;top:724px;width:517px;height:1px;background:#ececf0"></div>
<div class="a" style="left:40px;top:687px;width:1px;height:38px;background:#e0e3ea"></div>
<div class="a" style="left:209px;top:687px;width:1px;height:38px;background:#e0e3ea"></div>
<div class="a" style="left:463px;top:687px;width:1px;height:38px;background:#e0e3ea"></div>
<div class="a" style="left:548.5px;top:686.8px;width:17.5px;height:149.2px;background:#e8e8ec"></div>
<svg style="left:553px;top:694px" width="9" height="5" viewBox="0 0 9 5"><path d="M0 5 H9 L4.5 0 Z" fill="#c6c8d2"/></svg>
<svg style="left:553px;top:825px" width="9" height="5" viewBox="0 0 9 5"><path d="M0 0 H9 L4.5 5 Z" fill="#c6c8d2"/></svg>
<!-- watch tabs -->
<div class="a" style="left:31px;top:836.3px;width:79px;height:21px;background:#4d6082"></div>
<div class="a" style="left:110px;top:836px;width:85px;height:21px;background:#fff"></div>
<!-- ===== error list panel ===== -->
<div class="a" style="left:573px;top:665px;width:541px;height:172px;background:#fff;border:1px solid #8e9bbc;box-sizing:border-box"></div>
<div class="a" style="left:574px;top:666px;width:540px;height:21px;background:#4d6082"></div>
<svg style="left:1065px;top:674px" width="8" height="5" viewBox="0 0 8 5"><path d="M0 0 H8 L4 4.5 Z" fill="#ced4e4"/></svg>
<svg style="left:1082px;top:671px" width="7.4" height="11" viewBox="0 0 9 11" preserveAspectRatio="none"><path d="M2.5 0.5 H6.5 V6 M2.5 0.5 V6 M5.5 0.5 V6 M0.5 6.5 H8.5 M4.5 6.5 V11" stroke="#ced4e4" stroke-width="1" fill="none"/></svg>
<svg style="left:1097px;top:672px" width="10" height="9" viewBox="0 0 10 9"><path d="M0.7 0.5 L9.3 8.5 M9.3 0.5 L0.7 8.5" stroke="#ced4e4" stroke-width="1.3"/></svg>
<!-- toolbar -->
<div class="a" style="left:574px;top:687px;width:540px;height:49.5px;background:#cfd6e5"></div>
<div class="combo" style="left:581px;top:690.5px;width:150px;height:19.5px;border-color:#e5e9f3"></div>
<svg style="left:721px;top:699px" width="6" height="4" viewBox="0 0 6 4"><path d="M0 0 H6 L3 3.6 Z" fill="#1e1e1e"/></svg>
<div class="a" style="left:737px;top:691px;width:1px;height:18px;background:#a9b2c6"></div>
<div class="a" style="left:742px;top:689px;width:72px;height:22px;background:#f6f7fb;border:1px solid #3e4a63;box-sizing:border-box"></div>
<svg style="left:746px;top:693px" width="15" height="15" viewBox="0 0 15 15"><circle cx="7.5" cy="7.5" r="7" fill="#e1261c"/><path d="M4.3 4.3 L10.7 10.7 M10.7 4.3 L4.3 10.7" stroke="#fff" stroke-width="2"/></svg>
<div class="a" style="left:818px;top:691px;width:1px;height:18px;background:#a9b2c6"></div>
<div class="a" style="left:822px;top:689px;width:102px;height:22px;background:#f6f7fb;border:1px solid #3e4a63;box-sizing:border-box"></div>
<svg style="left:825px;top:693px" width="16" height="15" viewBox="0 0 16 15"><path d="M8 0.8 L15.4 14.2 H0.6 Z" fill="#fccb1b" stroke="#d9a400" stroke-width="0.8"/><path d="M8 5 V10" stroke="#1e1e1e" stroke-width="1.8"/><rect x="7.1" y="11.2" width="1.8" height="1.8" fill="#1e1e1e"/></svg>
<div class="a" style="left:928px;top:691px;width:1px;height:18px;background:#a9b2c6"></div>
<svg style="left:935px;top:693px" width="15" height="15" viewBox="0 0 15 15"><circle cx="7.5" cy="7.5" r="7" fill="#1ba1e2"/><rect x="6.6" y="6.3" width="1.9" height="5.5" fill="#fff"/><rect x="6.6" y="3.2" width="1.9" height="1.9" fill="#fff"/></svg>
<div class="a" style="left:1044px;top:691px;width:1px;height:18px;background:#a9b2c6"></div>
<div class="a" style="left:1048px;top:689px;width:22px;height:22px;background:#f6f7fb;border:1px solid #3e4a63;box-sizing:border-box"></div>
<svg style="left:1051px;top:693px" width="15" height="15" viewBox="0 0 16 16"><path d="M1 1 L6 6 M6 1 L1 6" stroke="#b3140f" stroke-width="1.7"/><path d="M6 6.5 H15.5 L12 10.5 V15 L9.8 13.5 V10.5 Z" fill="#1e1e1e"/></svg>
<div class="a" style="left:1073px;top:691px;width:1px;height:18px;background:#a9b2c6"></div>
<svg style="left:1106px;top:690px" width="5" height="4" viewBox="0 0 5 4"><path d="M0.5 0 V3 M3.5 0 V3" stroke="#1e1e1e" stroke-width="1"/></svg>
<!-- search row -->
<div class="a" style="left:575px;top:714px;width:538.5px;height:19.3px;background:#fff"></div>
<svg style="left:1087px;top:717px" width="13" height="13" viewBox="0 0 13 13"><circle cx="8" cy="5" r="3.4" fill="none" stroke="#4d5566" stroke-width="1.5"/><path d="M5.7 7.3 L1.2 11.8" stroke="#4d5566" stroke-width="2"/></svg>
<svg style="left:1104px;top:722px" width="6" height="4" viewBox="0 0 6 4"><path d="M0 0 H6 L3 3.6 Z" fill="#4d5566"/></svg>
<!-- header row -->
<div class="a" style="left:574px;top:736.4px;width:523px;height:20.4px;background:#f6f6f8;border-bottom:1px solid #c4c6cc;box-sizing:border-box"></div>
<div class="a" style="left:574px;top:736.4px;width:54px;height:19.4px;background:#f5f5f7"></div>
<div class="a" style="left:601px;top:736.4px;width:1px;height:19.4px;background:#ccd3e5"></div>
<div class="a" style="left:627px;top:736.4px;width:1px;height:19.4px;background:#ccd3e5"></div>
<div class="a" style="left:759px;top:736.4px;width:1px;height:19.4px;background:#ccd3e5"></div>
<div class="a" style="left:909px;top:736.4px;width:1px;height:19.4px;background:#ccd3e5"></div>
<div class="a" style="left:1059px;top:736.4px;width:1px;height:19.4px;background:#ccd3e5"></div>
<div class="a" style="left:1093.5px;top:736.4px;width:2px;height:19.4px;background:#d4d9e6"></div>
<svg style="left:616px;top:739px" width="6" height="6" viewBox="0 0 6 6"><path d="M0 0.5 H5.5 V6 M1.5 2.5 H3.5 V4.5" stroke="#555" stroke-width="1" fill="none"/></svg>
<!-- scrollbar -->
<div class="a" style="left:1096.5px;top:736.4px;width:17.5px;height:99.6px;background:#e8e8ec"></div>
<svg style="left:1101px;top:743px" width="9" height="5" viewBox="0 0 9 5"><path d="M0 5 H9 L4.5 0 Z" fill="#868999"/></svg>
<div class="a" style="left:1101.2px;top:754.2px;width:8.8px;height:39.5px;background:#c2c3c9"></div>
<svg style="left:1101px;top:825px" width="9" height="5" viewBox="0 0 9 5"><path d="M0 0 H9 L4.5 5 Z" fill="#868999"/></svg>
<!-- row warning icon -->
<svg style="left:606px;top:781px" width="14.5" height="15" viewBox="0 0 16 15"><path d="M8 0.8 L15.4 14.2 H0.6 Z" fill="#fccb1b" stroke="#d9a400" stroke-width="0.8"/><path d="M8 5 V10" stroke="#1e1e1e" stroke-width="1.8"/><rect x="7.1" y="11.2" width="1.8" height="1.8" fill="#1e1e1e"/></svg>
<!-- error list tabs -->
<div class="a" style="left:574px;top:836.3px;width:477px;height:21px;background:#4d6082"></div>
<div class="a" style="left:1051px;top:836px;width:63px;height:21px;background:#fff"></div>

<!-- ===== status bar ===== -->
<div class="a" style="left:0;top:862.5px;width:1145px;height:24px;background:#ca5100"></div>
<svg style="left:4px;top:869px" width="17" height="12" viewBox="0 0 17 12"><path d="M3.5 1 H16 L13.5 11 H1 Z" fill="none" stroke="#fff" stroke-width="1.4"/></svg>
<svg style="left:882px;top:869px" width="9" height="12" viewBox="0 0 9 12"><path d="M4.5 12 V2 M0.8 5.2 L4.5 1.5 L8.2 5.2" stroke="#fff" stroke-width="1.7" fill="none"/></svg>
<svg style="left:1104px;top:872px" width="8" height="5" viewBox="0 0 8 5"><path d="M0 5 H8 L4 0.5 Z" fill="#fff"/></svg>
<svg style="left:1130px;top:871px" width="11" height="11" viewBox="0 0 11 11"><g fill="#e08a58"><rect x="8" y="0" width="2" height="2"/><rect x="4" y="4" width="2" height="2"/><rect x="8" y="4" width="2" height="2"/><rect x="0" y="8" width="2" height="2"/><rect x="4" y="8" width="2" height="2"/><rect x="8" y="8" width="2" height="2"/></g></svg>

<div class="t" style="left:44px;top:9.6px;height:16px;line-height:16px;font-size:11.5px;color:#1e1e1e;letter-spacing:0.223px;">test2.py (Debugging) - Microsoft Visual Studio</div>
<div class="t" style="left:10px;top:32.5px;height:16px;line-height:16px;font-size:11.5px;color:#1e1e1e;letter-spacing:0.028px;">Datei</div>
<div class="t" style="left:57px;top:32.5px;height:16px;line-height:16px;font-size:11.5px;color:#1e1e1e;letter-spacing:0.037px;">Bearbeiten</div>
<div class="t" style="left:133px;top:32.5px;height:16px;line-height:16px;font-size:11.5px;color:#1e1e1e;letter-spacing:0.326px;">Ansicht</div>
<div class="t" style="left:193px;top:32.5px;height:16px;line-height:16px;font-size:11.5px;color:#1e1e1e;letter-spacing:0.172px;">Projekt</div>
<div class="t" style="left:250px;top:32.5px;height:16px;line-height:16px;font-size:11.5px;color:#1e1e1e;letter-spacing:0.240px;">Debuggen</div>
<div class="t" style="left:325px;top:32.5px;height:16px;line-height:16px;font-size:11.5px;color:#1e1e1e;letter-spacing:0.219px;">Team</div>
<div class="t" style="left:374px;top:32.5px;height:16px;line-height:16px;font-size:11.5px;color:#1e1e1e;letter-spacing:-0.432px;">Extras</div>
<div class="t" style="left:424px;top:32.5px;height:16px;line-height:16px;font-size:11.5px;color:#1e1e1e;letter-spacing:-0.023px;">Test</div>
<div class="t" style="left:465px;top:32.5px;height:16px;line-height:16px;font-size:11.5px;color:#1e1e1e;letter-spacing:0.082px;">Analysieren</div>
<div class="t" style="left:545px;top:32.5px;height:16px;line-height:16px;font-size:11.5px;color:#1e1e1e;letter-spacing:0.143px;">Fenster</div>
<div class="t" style="left:604px;top:32.5px;height:16px;line-height:16px;font-size:11.5px;color:#1e1e1e;letter-spacing:0.597px;">Hilfe</div>
<div class="t" style="left:1029.2px;top:33.3px;height:16px;line-height:16px;font-size:11.5px;color:#1e1e1e;letter-spacing:0.202px;">Harold Linke</div>
<div class="t" style="left:1120.8px;top:33.3px;height:16px;line-height:16px;font-size:11.5px;color:#ffffff;letter-spacing:-0.052px;">HL</div>
<div class="t" style="left:847px;top:5.9px;height:16px;line-height:16px;font-size:11.5px;color:#6a6a6a;letter-spacing:0.062px;">Schnellstart (Strg+Q)</div>
<div class="t" style="left:483.5px;top:56.5px;height:16px;line-height:16px;font-size:11.5px;color:#1e1e1e;letter-spacing:0.078px;">Weiter</div>
<div class="t" style="left:23px;top:82.5px;height:16px;line-height:16px;font-size:11.5px;color:#1e1e1e;letter-spacing:-0.469px;">Prozess:</div>
<div class="t" style="left:75px;top:82.5px;height:16px;line-height:16px;font-size:11.5px;color:#000;letter-spacing:-0.209px;">[10268] vegas160.exe</div>
<div class="t" style="left:298px;top:82.5px;height:16px;line-height:16px;font-size:11.5px;color:#9398a5;letter-spacing:-0.123px;">Ereignisse des Lebenszyklus</div>
<div class="t" style="left:461.5px;top:82.5px;height:16px;line-height:16px;font-size:11.5px;color:#1e1e1e;letter-spacing:-0.234px;">Thread:</div>
<div class="t" style="left:511.5px;top:82.5px;height:16px;line-height:16px;font-size:11.5px;color:#000;letter-spacing:0.165px;">[17216] Hauptthread</div>
<div class="t" style="left:779px;top:82.5px;height:16px;line-height:16px;font-size:11.5px;color:#1e1e1e;letter-spacing:0.093px;">Stapelrahmen:</div>
<div class="t" style="left:866px;top:82.5px;height:16px;line-height:16px;font-size:11.5px;color:#000;letter-spacing:0.392px;">&lt;unnamed&gt;$2.&lt;unnamed&gt;</div>
<div class="t" style="left:35.4px;top:113.7px;height:16px;line-height:16px;font-size:11.5px;color:#000;letter-spacing:0.027px;">test2.py</div>
<div class="t" style="left:35.4px;top:641.9px;height:16px;line-height:16px;font-size:11.5px;color:#000;letter-spacing:-1.062px;">100</div>
<div class="t" style="left:56px;top:641.9px;height:16px;line-height:16px;font-size:11.5px;color:#000;letter-spacing:-0.634px;">%</div>
<div class="t" style="left:812.5px;top:114.6px;height:16px;line-height:16px;font-size:11.5px;color:#ffffff;letter-spacing:0.124px;">Diagnosetools</div>
<div class="t" style="left:818.5px;top:162.7px;height:16px;line-height:16px;font-size:11px;color:#000;letter-spacing:0.533px;-webkit-text-stroke:0.4px;">Diagnosesitzung: 1:49 Minuten</div>
<div class="t" style="left:956px;top:182.6px;height:16px;line-height:16px;font-size:11.5px;color:#1e1e1e;letter-spacing:-0.132px;">1:40min</div>
<div class="t" style="left:825.5px;top:207.7px;height:16px;line-height:16px;font-size:11px;color:#1e1e1e;letter-spacing:0.214px;-webkit-text-stroke:0.4px;">Ereignisse</div>
<div class="t" style="left:825.5px;top:250.6px;height:16px;line-height:16px;font-size:11px;color:#1e1e1e;letter-spacing:0.245px;-webkit-text-stroke:0.4px;">Prozessspeicher (GB)</div>
<div class="t" style="left:825.5px;top:340.8px;height:16px;line-height:16px;font-size:11px;color:#1e1e1e;letter-spacing:0.298px;-webkit-text-stroke:0.4px;">CPU (% aller Prozessoren)</div>
<div class="t" style="left:832.5px;top:268.6px;height:16px;line-height:16px;font-size:11.5px;color:#1e1e1e;letter-spacing:0.594px;">4</div>
<div class="t" style="left:832.5px;top:323px;height:16px;line-height:16px;font-size:11.5px;color:#1e1e1e;letter-spacing:0.594px;">0</div>
<div class="t" style="left:1082px;top:268.6px;height:16px;line-height:16px;font-size:11.5px;color:#1e1e1e;letter-spacing:0.594px;">4</div>
<div class="t" style="left:1082px;top:323px;height:16px;line-height:16px;font-size:11.5px;color:#1e1e1e;letter-spacing:0.594px;">0</div>
<div class="t" style="left:820px;top:358.5px;height:16px;line-height:16px;font-size:11.5px;color:#1e1e1e;letter-spacing:-0.062px;">100</div>
<div class="t" style="left:832px;top:412.5px;height:16px;line-height:16px;font-size:11.5px;color:#1e1e1e;letter-spacing:0.594px;">0</div>
<div class="t" style="left:1082px;top:358.5px;height:16px;line-height:16px;font-size:11.5px;color:#1e1e1e;letter-spacing:-0.062px;">100</div>
<div class="t" style="left:1082px;top:412.5px;height:16px;line-height:16px;font-size:11.5px;color:#1e1e1e;letter-spacing:0.594px;">0</div>
<div class="t" style="left:814.3px;top:454.7px;height:16px;line-height:16px;font-size:11.5px;color:#1e1e1e;letter-spacing:0.147px;">Zusammenfassung</div>
<div class="t" style="left:927px;top:454.7px;height:16px;line-height:16px;font-size:11.5px;color:#1e1e1e;letter-spacing:-0.170px;">Ereignisse</div>
<div class="t" style="left:991px;top:454.7px;height:16px;line-height:16px;font-size:11.5px;color:#1e1e1e;letter-spacing:-0.007px;">Speicherauslastun</div>
<div class="t" style="left:817.4px;top:480.3px;height:16px;line-height:16px;font-size:11px;color:#1e1e1e;letter-spacing:0.214px;-webkit-text-stroke:0.4px;">Ereignisse</div>
<div class="t" style="left:844.6px;top:505.8px;height:16px;line-height:16px;font-size:11.5px;color:#1e1e1e;letter-spacing:0.012px;">Ereignisse anzeigen (1 von 1)</div>
<div class="t" style="left:817.4px;top:532px;height:16px;line-height:16px;font-size:11px;color:#1e1e1e;letter-spacing:0.438px;-webkit-text-stroke:0.4px;">Speicherauslastung</div>
<div class="t" style="left:844.6px;top:557.7px;height:16px;line-height:16px;font-size:11.5px;color:#1e1e1e;letter-spacing:0.256px;">Momentaufnahme erstellen</div>
<div class="t" style="left:817.4px;top:583.8px;height:16px;line-height:16px;font-size:11px;color:#1e1e1e;letter-spacing:0.405px;-webkit-text-stroke:0.4px;">CPU-Auslastung</div>
<div class="t" style="left:844.6px;top:609.5px;height:16px;line-height:16px;font-size:11.5px;color:#1e1e1e;letter-spacing:0.113px;">CPU-Profilerstellung aufzeichnen</div>
<div class="t" style="left:36.5px;top:668.5px;height:16px;line-height:16px;font-size:11.5px;color:#ffffff;letter-spacing:-0.055px;">Überwachen 1</div>
<div class="t" style="left:46px;top:688.7px;height:16px;line-height:16px;font-size:11.5px;color:#1e1e1e;letter-spacing:0.328px;">Name</div>
<div class="t" style="left:215px;top:688.7px;height:16px;line-height:16px;font-size:11.5px;color:#1e1e1e;letter-spacing:0.230px;">Wert</div>
<div class="t" style="left:469px;top:688.7px;height:16px;line-height:16px;font-size:11.5px;color:#1e1e1e;letter-spacing:0.151px;">Typ</div>
<div class="t" style="left:37px;top:838.7px;height:16px;line-height:16px;font-size:11.5px;color:#ffffff;letter-spacing:0.582px;">Auto</div>
<div class="t" style="left:75px;top:838.7px;height:16px;line-height:16px;font-size:11.5px;color:#ffffff;letter-spacing:0.100px;">Lokal</div>
<div class="t" style="left:115.3px;top:837.5px;height:16px;line-height:16px;font-size:11.5px;color:#000;letter-spacing:-0.038px;">Überwachen 1</div>
<div class="t" style="left:578px;top:668.5px;height:16px;line-height:16px;font-size:11.5px;color:#ffffff;letter-spacing:-0.006px;">Fehlerliste</div>
<div class="t" style="left:585.5px;top:692.4px;height:16px;line-height:16px;font-size:11.5px;color:#000;letter-spacing:0.084px;">Gesamte Projektmappe</div>
<div class="t" style="left:765.4px;top:692px;height:16px;line-height:16px;font-size:11.5px;color:#000;letter-spacing:-0.148px;">0 Fehler</div>
<div class="t" style="left:845.5px;top:692px;height:16px;line-height:16px;font-size:11.5px;color:#000;letter-spacing:0.216px;">0 Warnungen</div>
<div class="t" style="left:955.5px;top:692px;height:16px;line-height:16px;font-size:11.5px;color:#000;letter-spacing:0.385px;">0 Mitteilungen</div>
<div class="t" style="left:579px;top:715.5px;height:16px;line-height:16px;font-size:11.5px;color:#717171;letter-spacing:0.126px;">Fehlerliste durchsuchen</div>
<div class="t" style="left:631.7px;top:738.8px;height:16px;line-height:16px;font-size:11.5px;color:#1e1e1e;letter-spacing:0.139px;">Beschreibung</div>
<div class="t" style="left:762px;top:738.8px;height:16px;line-height:16px;font-size:11.5px;color:#1e1e1e;letter-spacing:0.172px;">Projekt</div>
<div class="t" style="left:913px;top:738.8px;height:16px;line-height:16px;font-size:11.5px;color:#1e1e1e;letter-spacing:-0.172px;">Datei</div>
<div class="t" style="left:1062px;top:738.8px;height:16px;line-height:16px;font-size:11.5px;color:#1e1e1e;letter-spacing:-0.203px;">Ze...</div>
<div class="t" style="left:627.3px;top:758.7px;height:16px;line-height:16px;font-size:11.5px;color:#1e1e1e;letter-spacing:0.088px;">Unable to resolve</div>
<div class="t" style="left:627.3px;top:773.7px;height:16px;line-height:16px;font-size:11.5px;color:#1e1e1e;letter-spacing:0.014px;">&#x27;ScriptPortal.Vegas&#x27;.</div>
<div class="t" style="left:627.3px;top:788.7px;height:16px;line-height:16px;font-size:11.5px;color:#1e1e1e;letter-spacing:0.007px;">IntelliSense may be</div>
<div class="t" style="left:627.3px;top:803.7px;height:16px;line-height:16px;font-size:11.5px;color:#1e1e1e;letter-spacing:0.279px;">missing for this module.</div>
<div class="t" style="left:627.3px;top:822.5px;height:16px;line-height:16px;font-size:11.5px;color:#1e1e1e;letter-spacing:0.088px;clip-path:inset(0 0 2.3px 0);">Unable to resolve</div>
<div class="t" style="left:908px;top:781.8px;height:16px;line-height:16px;font-size:11.5px;color:#1e1e1e;letter-spacing:0.090px;">test2.py</div>
<div class="t" style="left:1058.5px;top:781.7px;height:16px;line-height:16px;font-size:11.5px;color:#1e1e1e;letter-spacing:-0.648px;">32</div>
<div class="t" style="left:579px;top:838.7px;height:16px;line-height:16px;font-size:11.5px;color:#ffffff;letter-spacing:0.351px;">Aufrufliste</div>
<div class="t" style="left:646px;top:838.7px;height:16px;line-height:16px;font-size:11.5px;color:#ffffff;letter-spacing:0.330px;">Haltepunkte</div>
<div class="t" style="left:723px;top:838.7px;height:16px;line-height:16px;font-size:11.5px;color:#ffffff;letter-spacing:0.102px;">Ausnahmeeinste...</div>
<div class="t" style="left:833px;top:838.7px;height:16px;line-height:16px;font-size:11.5px;color:#ffffff;letter-spacing:0.035px;">Befehlsfenster</div>
<div class="t" style="left:919px;top:838.7px;height:16px;line-height:16px;font-size:11.5px;color:#ffffff;letter-spacing:0.139px;">Direktfenster</div>
<div class="t" style="left:998px;top:838.7px;height:16px;line-height:16px;font-size:11.5px;color:#ffffff;letter-spacing:0.085px;">Ausgabe</div>
<div class="t" style="left:1057px;top:837.5px;height:16px;line-height:16px;font-size:11.5px;color:#000;letter-spacing:-0.097px;">Fehlerliste</div>
<div class="t" style="left:28px;top:866.7px;height:16px;line-height:16px;font-size:11.5px;color:#ffffff;letter-spacing:-0.008px;">Bereit</div>
<div class="t" style="left:365px;top:866.7px;height:16px;line-height:16px;font-size:11.5px;color:#ffffff;letter-spacing:-0.484px;">Z 525</div>
<div class="t" style="left:456px;top:866.7px;height:16px;line-height:16px;font-size:11.5px;color:#ffffff;letter-spacing:-0.755px;">S 1</div>
<div class="t" style="left:549px;top:866.7px;height:16px;line-height:16px;font-size:11.5px;color:#ffffff;letter-spacing:-0.316px;">Zei 1</div>
<div class="t" style="left:685px;top:866.7px;height:16px;line-height:16px;font-size:11.5px;color:#ffffff;letter-spacing:-0.628px;">EINFG</div>
<div class="t" style="left:901px;top:866.7px;height:16px;line-height:16px;font-size:11.5px;color:#ffffff;letter-spacing:0.256px;">Zur Quellcodeverwaltung hinzufügen</div>
<div class="t" style="left:8.7px;top:111.5px;width:16px;line-height:16px;font-size:11.5px;color:#ffffff;letter-spacing:0.058px;writing-mode:vertical-rl;">Visueller Livebaum</div>
<div class="t" style="left:1121px;top:111.5px;width:16px;line-height:16px;font-size:11.5px;color:#ffffff;letter-spacing:0.158px;writing-mode:vertical-rl;">Projektmappen-Explorer</div>
<div class="t" style="left:1121px;top:251.7px;width:16px;line-height:16px;font-size:11.5px;color:#ffffff;letter-spacing:-0.088px;writing-mode:vertical-rl;">Team Explorer</div>
<div class="t" style="left:1121px;top:338.4px;width:16px;line-height:16px;font-size:11.5px;color:#ffffff;letter-spacing:0.038px;writing-mode:vertical-rl;">Live-Eigenschaften-Explorer</div>
</body></html>
